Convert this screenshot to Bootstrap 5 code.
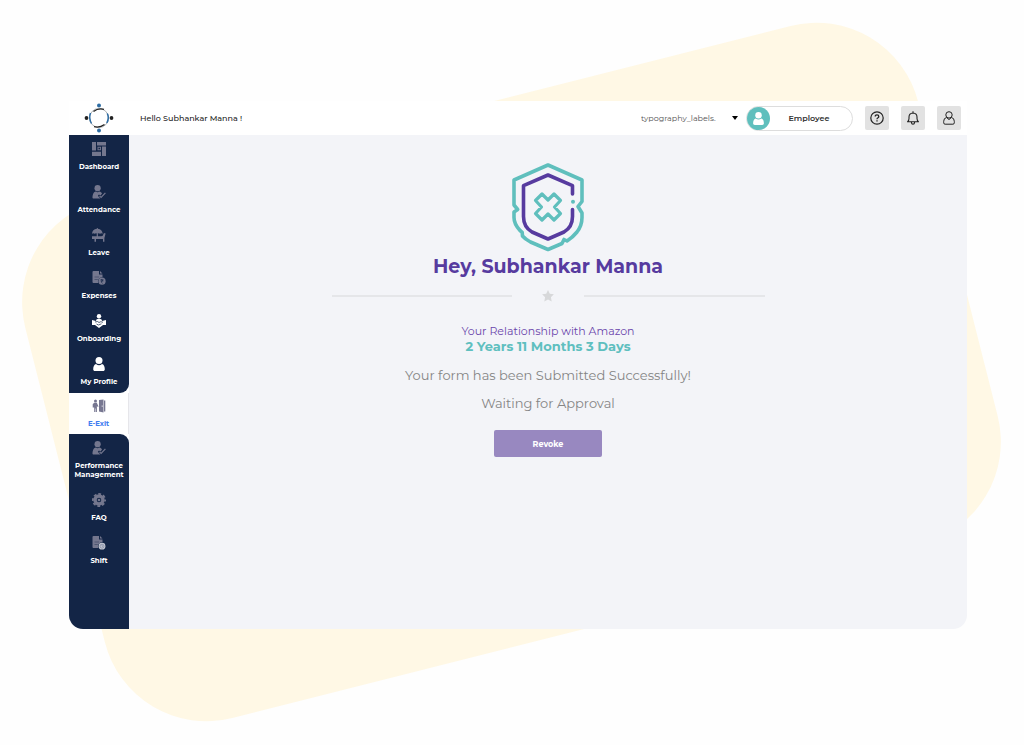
<!DOCTYPE html>
<html lang="en">
<head>
<meta charset="utf-8">
<meta name="viewport" content="width=device-width, initial-scale=1">
<title>E-Exit</title>
<link href="https://cdn.jsdelivr.net/npm/bootstrap@5.3.0/dist/css/bootstrap.min.css" rel="stylesheet">
<style>
  body { font-family: Montserrat, Inter, sans-serif; background: #fefefe; color: #222; }
  .stage { padding: 101px 57px 116px 69px; }
  .backdrop { z-index: 0; }
  .window { z-index: 1; }
  .topbar { height: 34px; padding-right: 6px; }
  .brand { width: 60px; }
  .hello { font-size: 8px; font-weight: 500; margin-left: 11px; }
  .label-select { width: 97px; font-size: 8px; color: #555; appearance: none; line-height: 16px;
    background: url("data:image/svg+xml,%3Csvg xmlns='http://www.w3.org/2000/svg' width='6' height='4'%3E%3Cpath d='M0 0h6L3 4z'/%3E%3C/svg%3E") no-repeat right center; }
  .role { width: 107px; height: 25px; border: 1px solid #ddd; font-size: 8px; font-weight: 600; color: #333; }
  .role svg { display: block; }
  .tools { gap: 12px; }
  .tool { width: 24px; height: 24px; background: #e2e2e2; border-radius: 2px; }
  .shell { border-radius: 0 0 14px 14px; background: #f3f4f8; }
  .side { width: 60px; background: #fff; }
  .navy { background: #132546; }
  .first-group { border-bottom-right-radius: 9px; }
  .last-group { border-top-right-radius: 9px; }
  .item { padding: 7px 0; gap: 6px; font-size: 7px; line-height: 9px; font-weight: 700; color: #fff; }
  .item svg { width: 14px; height: 14px; overflow: visible; color: #74778e; fill: currentColor; }
  .item.bright svg { color: #fff; }
  .item.current { padding: 6px 0; color: #3f7df0; border-right: 1px solid #e6e6ea; }
  .item.current svg { color: #777791; }
  .content { padding: 28px 16px; }
  h1 { font-size: 19px; line-height: 30px; font-weight: 700; color: #573b9f; }
  .rule { height: 2px; background: #e5e6e9; }
  .divider { width: 433px; max-width: 100%; gap: 29px; margin: 7px 0 21px; }
  .relation { font-size: 11px; line-height: 14px; color: #6a45ab; }
  .tenure { font-size: 13px; line-height: 16px; font-weight: 700; color: #5fbfbf; margin-bottom: 12px; }
  .note { font-size: 13px; line-height: 18px; font-weight: 400; color: #858585; margin-bottom: 10px; }
  .revoke { width: 108px; height: 27px; margin-top: 8px; background: #9888c0; color: #fff; font-size: 8px; font-weight: 700; border-radius: 2px; }
</style>
</head>
<body>
<svg width="0" height="0" class="position-absolute" aria-hidden="true">
  <symbol id="person" viewBox="0 0 14 14"><circle cx="7" cy="3.6" r="3.5"/><path d="M1.2 12.2C1.2 9 2.4 7.400 4 6.900a4.700 4.700 0 0 0 6 0c1.700.5 2.800 2.100 2.800 5.300 0 1.200-.7 1.800-1.800 1.800H3c-1.100 0-1.800-.6-1.800-1.800z"/></symbol>
  <symbol id="person-check" viewBox="0 0 14 14"><circle cx="5.600" cy="3.200" r="3.100"/><path d="M.5 13C.5 8.800 2 7 3.700 6.600q1.900 1.300 3.800 0c1.200.3 2 1 2.500 2L8.500 10.500 7 9.400l-1.200 1.400L8.400 13.500H1.100z"/><path d="m7.500 10.800 1.600 1.600 4.300-4.600" fill="none" stroke="currentColor" stroke-width="1.200"/></symbol>
  <symbol id="sheet" viewBox="0 0 14 14"><path d="M1.500 0H7v3.500h3.500v2.800A4 4 0 0 0 6.300 12H1.500Q.5 12 .5 11V1q0-1 1-1zM8 0l2.500 2.500H8z"/><path d="M2.500 6h4.500M2.500 8.500h3.300" stroke="#132546" stroke-width=".4"/></symbol>
</svg>

<div class="stage position-relative min-vh-100 d-flex flex-column">
  <svg class="backdrop position-absolute top-0 start-0 w-100 h-100" viewBox="0 0 1024 745" preserveAspectRatio="none" aria-hidden="true">
    <rect x="51" y="105" width="921" height="534" rx="105" fill="#fff8e5" transform="rotate(-14.200 511.500 372)"/>
  </svg>

  <div class="window position-relative flex-grow-1 d-flex flex-column">
    <header class="topbar bg-white d-flex align-items-center">
      <div class="brand d-flex justify-content-center">
        <svg width="30" height="30" viewBox="0 0 30 30" fill="none" role="img" aria-label="Company logo">
          <circle cx="15" cy="15" r="9.500" stroke="#8d9094" stroke-width=".7"/>
          <path d="M7.500 20.500Q4.500 15 6.500 10M23.300 10.500Q25.500 15 22.800 20" stroke="#2d6ca3" stroke-width="1.500"/>
          <path d="M9.500 8.500Q14 5 20 6.300M10 23.700Q16 25 20.500 21.500" stroke="#222" stroke-width="1.300"/>
          <circle cx="15" cy="2.500" r="2" fill="#2d6ca3"/><circle cx="15" cy="27.500" r="2" fill="#2d6ca3"/>
          <circle cx="2.500" cy="15" r="1.900" fill="#222"/><circle cx="27.500" cy="15" r="1.900" fill="#222"/>
        </svg>
      </div>
      <div class="hello">Hello Subhankar Manna !</div>
      <select class="label-select border-0 p-0 ms-auto" aria-label="Label"><option>typography_labels.</option></select>
      <button type="button" class="role btn p-0 bg-white rounded-pill d-flex align-items-center ms-2">
        <svg width="23" height="23" viewBox="0 0 23 23" aria-hidden="true"><circle cx="11.500" cy="11.500" r="11.500" fill="#5fbfbd"/><use href="#person" x="5" y="5" width="13" height="13" fill="#fff"/></svg>
        <span class="flex-grow-1 text-center pe-1">Employee</span>
      </button>
      <div class="tools d-flex ms-2 ps-1">
        <button type="button" class="tool border-0 p-0 d-flex align-items-center justify-content-center" aria-label="Help">
          <svg width="14" height="14" viewBox="0 0 14 14" fill="none" stroke="#222"><circle cx="7" cy="7" r="6.200" stroke-width="1.200"/><path d="M5.200 5.600Q5.200 3.900 7 3.900T8.800 5.500Q8.800 6.500 7.700 7 7 7.300 7 8.300M7 9.300v1.300" stroke-width="1.300"/></svg>
        </button>
        <button type="button" class="tool border-0 p-0 d-flex align-items-center justify-content-center" aria-label="Notifications">
          <svg width="14" height="14" viewBox="0 0 14 14" fill="none" stroke="#222" stroke-width="1.100" stroke-linejoin="round"><path d="M1.500 10.800Q3 9.500 3 7.500V6Q3 2.400 7 2q4 .4 4 4v1.500q0 2 1.500 3.300zM7 2V.3M5.300 11.200Q5.600 13.300 7 13.300t1.700-2.100"/></svg>
        </button>
        <button type="button" class="tool border-0 p-0 d-flex align-items-center justify-content-center" aria-label="Account">
          <svg width="14" height="14" viewBox="0 0 14 14" fill="none" stroke="#222" stroke-width="1"><circle cx="7" cy="3.900" r="3.200"/><path d="M4.600 6.500Q1.700 7 1.700 10.300v1.500q0 1.400 1.400 1.400h7.800q1.400 0 1.400-1.400v-1.500q0-3.300-2.900-3.800M4.600 6.500 7 8.600l2.400-2.100"/></svg>
        </button>
      </div>
    </header>

    <div class="shell flex-grow-1 d-flex overflow-hidden">
      <nav class="side flex-shrink-0 d-flex flex-column" aria-label="Main">
        <div class="navy first-group">
          <a href="#" class="item d-flex flex-column align-items-center text-center text-decoration-none">
            <svg viewBox="0 0 14 14"><path d="M0 0h4v8.500H0zM5 0h9v3.500H5zM10 4.500h4V14h-4zM0 9.800h9V14H0zM5.500 4.700H9v3.600H5.500z"/><path d="M6.500 5.800h1.600v1.500H6.500z" fill="#132546"/></svg>Dashboard</a>
          <a href="#" class="item d-flex flex-column align-items-center text-center text-decoration-none">
            <svg><use href="#person-check"/></svg>Attendance</a>
          <a href="#" class="item d-flex flex-column align-items-center text-center text-decoration-none">
            <svg viewBox="0 0 14 14"><path d="M0 5.700Q.3 1 4.900.7V0h.9v.7Q10.200 1 10.700 5.700q-1.300-1-2.700 0-1.300-1-2.700 0-1.300-1-2.600 0-1.400-1-2.700 0zM4.700 5h1.200v3.300H9L10.500 8l1.500-3 1.600.5L12.400 10v3.700H11V11H4v2.700H2.500V11H0V8.300h4.700z"/></svg>Leave</a>
          <a href="#" class="item d-flex flex-column align-items-center text-center text-decoration-none">
            <svg viewBox="0 0 14 14"><use href="#sheet"/><circle cx="10" cy="10.200" r="3.600"/><path d="M8.500 8.700h3M8.500 9.900h3M9 8.700q2.300 0 1.300 1.500l-1.300.6 1.700 1.600" fill="none" stroke="#132546" stroke-width=".6"/></svg>Expenses</a>
          <a href="#" class="item bright d-flex flex-column align-items-center text-center text-decoration-none">
            <svg viewBox="0 0 14 14"><circle cx="7" cy="2.200" r="2.200"/><path d="M4 7q0-2.300 3-2.300T10 7l4-1v5l-3 .1L7 14l-4-2.900L0 11V6z"/><path d="m3 8 2.500-.5L7 8.500l1.800-.8 2.200.6M4.500 10l2 1 3-1.200" stroke="#132546" stroke-width=".7" fill="none"/></svg>Onboarding</a>
          <a href="#" class="item bright d-flex flex-column align-items-center text-center text-decoration-none">
            <svg><use href="#person"/></svg>My Profile</a>
        </div>
        <a href="#" class="item current d-flex flex-column align-items-center text-center text-decoration-none" aria-current="page">
          <svg viewBox="0 0 14 14"><circle cx="3.500" cy="1.900" r="1.500"/><path d="M2.200 3.800h2.600L6.500 7.500l-.8.500-.8-1.300V13H3.800V9.500h-.5V13H2.200V8.500H.7V5.300zM7 1l4.500-.5v13L7 12.500zM12 1.500h1.300v11H12z"/><path d="M10.200 6.500v1.300" stroke="#fff" stroke-width=".8"/></svg>E-Exit</a>
        <div class="navy last-group flex-grow-1">
          <a href="#" class="item d-flex flex-column align-items-center text-center text-decoration-none">
            <svg><use href="#person-check"/></svg><span>Performance<br>Management</span></a>
          <a href="#" class="item d-flex flex-column align-items-center text-center text-decoration-none">
            <svg viewBox="0 0 14 14"><circle cx="7" cy="7" r="4" fill="none" stroke="currentColor" stroke-width="3.400"/><circle cx="7" cy="7" r="1.300"/><circle cx="7" cy="7" r="6.100" fill="none" stroke="currentColor" stroke-width="1.800" stroke-dasharray="2.791 2" stroke-dashoffset="1.395"/></svg>FAQ</a>
          <a href="#" class="item d-flex flex-column align-items-center text-center text-decoration-none">
            <svg viewBox="0 0 14 14"><use href="#sheet"/><circle cx="10" cy="10.200" r="3.400" fill="#c5c9d3"/><circle cx="10" cy="10.200" r="2" fill="none" stroke="#77809a" stroke-width=".7"/><path d="M10 9v1.300h1" fill="none" stroke="#77809a" stroke-width=".6"/></svg>Shift</a>
        </div>
      </nav>

      <main class="content flex-grow-1 d-flex flex-column align-items-center text-center">
        <svg width="74" height="89" viewBox="0 0 74 89" fill="none" stroke-linecap="round" stroke-linejoin="round" stroke-width="3.600" class="flex-shrink-0" aria-hidden="true">
          <path d="M37 2 71 17V38.500L67 43.500 71 50v4.500q0 8-5 14.500-4.500 5.500-10 9L53 76.500l-2 4L37 86.500 19.500 79Q14 76 11.500 73l-.3-3.700L9 67.500Q3 61 3 54.500V49l3.700-2.500L3 42V17z" stroke="#5fbfbd"/>
          <path d="M61.500 31V22.700L37 12 12.500 22.700V53.500Q12.500 64 21 69l16 7 16-7Q61.500 64 61.500 53.500V46.500" stroke="#573b9f"/>
          <circle cx="62" cy="38.800" r="2" fill="#5fbfbd"/>
          <path d="m31 31 6 6 6-6 6.500 6.500-6 6.500 6 6.500L43 57l-6-6-6 6-6.500-6.500 6-6.500-6-6.500z" stroke="#5fbfbd" stroke-width="3.200"/>
        </svg>
        <h1 class="mb-0">Hey, Subhankar Manna</h1>
        <div class="divider d-flex align-items-center">
          <span class="rule flex-grow-1"></span>
          <svg width="14" height="14" viewBox="0 0 14 14" fill="#d7d8da" aria-hidden="true"><path d="m7 1 1.800 3.800 4.100.5-3 2.900.8 4.200L7 10.400l-3.700 2 .8-4.200-3-2.900 4.100-.5z"/></svg>
          <span class="rule flex-grow-1"></span>
        </div>
        <div class="relation">Your Relationship with Amazon</div>
        <div class="tenure">2 Years 11 Months 3 Days</div>
        <p class="note">Your form has been Submitted Successfully!</p>
        <p class="note">Waiting for Approval</p>
        <button type="button" class="revoke btn border-0 p-0">Revoke</button>
      </main>
    </div>
  </div>
</div>
<script src="https://cdn.jsdelivr.net/npm/bootstrap@5.3.0/dist/js/bootstrap.bundle.min.js"></script>
</body>
</html>
